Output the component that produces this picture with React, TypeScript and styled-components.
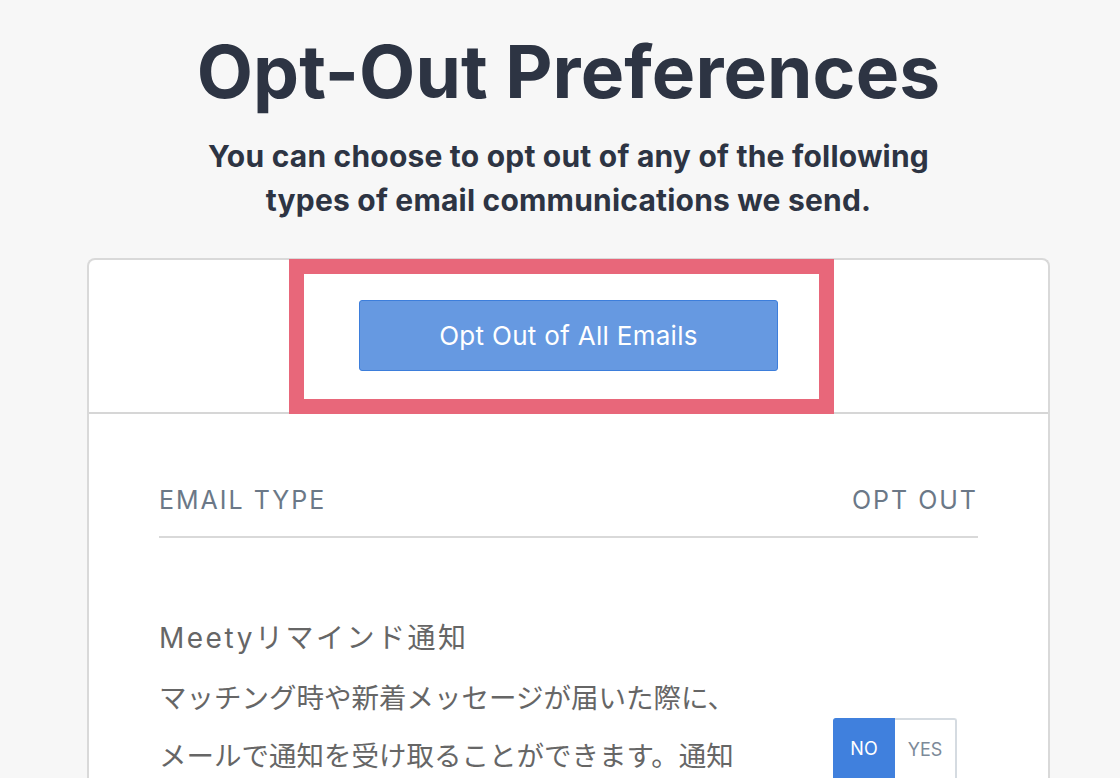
import React from "react";
import styled, { createGlobalStyle } from "styled-components";

const GlobalStyle = createGlobalStyle`
  html, body {
    margin: 0;
    padding: 0;
    background: #f7f7f7;
    font-family: Inter, "Noto Sans CJK JP", sans-serif;
    overflow: hidden;
  }
`;

const Page = styled.div`
  width: 963px;
  margin-left: 87px;
  display: flex;
  flex-direction: column;
  align-items: center;
`;

const Title = styled.h1`
  margin: 30px 0 0;
  font-size: 73px;
  line-height: 84px;
  font-weight: 700;
  color: #2d3443;
  letter-spacing: 0.1px;
  text-align: center;
`;

const Subtitle = styled.p`
  margin: 20px 0 0;
  width: 780px;
  font-size: 30px;
  line-height: 44px;
  font-weight: 700;
  color: #2d3443;
  letter-spacing: 0.2px;
  text-align: center;
`;

const Card = styled.div`
  position: relative;
  box-sizing: border-box;
  width: 963px;
  margin-top: 36px;
  background: #fff;
  border: 2px solid #d9d9d9;
  border-bottom: none;
  border-radius: 8px 8px 0 0;
`;

const TopSection = styled.div`
  box-sizing: border-box;
  height: 154px;
  padding-top: 40px;
  display: flex;
  justify-content: center;
  border-bottom: 2px solid #d6d6d6;
`;

const PrimaryButton = styled.button`
  box-sizing: border-box;
  width: 419px;
  height: 71px;
  background: #6699e1;
  border: 1px solid #3d7edb;
  border-radius: 3px;
  color: #fff;
  font-family: Inter, sans-serif;
  font-size: 26px;
  letter-spacing: 0.3px;
  font-weight: 400;
  cursor: pointer;
`;

const Highlight = styled.div`
  position: absolute;
  left: 200px;
  top: -1px;
  width: 545px;
  height: 155px;
  box-sizing: border-box;
  border: 15px solid #e8677a;
  pointer-events: none;
`;

const Body = styled.div`
  padding: 0 70px;
`;

const HeaderRow = styled.div`
  display: flex;
  justify-content: space-between;
  align-items: flex-end;
  height: 124px;
  box-sizing: border-box;
  padding-bottom: 21px;
  border-bottom: 2px solid #d9d9d9;
`;

const HeaderLabel = styled.span`
  font-size: 25px;
  line-height: 30px;
  letter-spacing: 2px;
  color: #6b7887;
  font-weight: 400;
`;

const TypeRow = styled.div`
  display: flex;
  justify-content: space-between;
  align-items: flex-start;
  padding-top: 80px;
`;

const TypeText = styled.div`
  display: flex;
  flex-direction: column;
`;

const TypeTitle = styled.div`
  font-family: Inter, "Noto Sans CJK JP", sans-serif;
  font-size: 28px;
  line-height: 40px;
  letter-spacing: 2.5px;
  color: #666;
`;

const TypeDesc = styled.div`
  margin-top: 9px;
  font-family: "Noto Sans CJK JP", sans-serif;
  font-size: 27.5px;
  line-height: 58px;
  color: #666;
  width: 620px;
`;

const Toggle = styled.div`
  display: flex;
  margin-top: 100px;
  margin-right: 21px;
`;

const ToggleOption = styled.button<{ $active?: boolean }>`
  box-sizing: border-box;
  width: 62px;
  height: 80px;
  padding: 0 0 20px;
  font-family: Inter, sans-serif;
  font-size: 18px;
  border-radius: ${(p) => (p.$active ? "3px 0 0 0" : "0 3px 0 0")};
  background: ${(p) => (p.$active ? "#4080dd" : "#fff")};
  color: ${(p) => (p.$active ? "#fff" : "#7d8a99")};
  border: ${(p) => (p.$active ? "1px solid #4080dd" : "2px solid #d5dbe1")};
  border-left: ${(p) => (p.$active ? "1px solid #4080dd" : "none")};
  border-bottom: none;
`;

export default function App() {
  return (
    <>
      <GlobalStyle />
      <Page>
        <Title>Opt-Out Preferences</Title>
        <Subtitle>
          You can choose to opt out of any of the following types of email communications we send.
        </Subtitle>
        <Card>
          <TopSection>
            <PrimaryButton>Opt Out of All Emails</PrimaryButton>
          </TopSection>
          <Highlight />
          <Body>
            <HeaderRow>
              <HeaderLabel>EMAIL TYPE</HeaderLabel>
              <HeaderLabel>OPT OUT</HeaderLabel>
            </HeaderRow>
            <TypeRow>
              <TypeText>
                <TypeTitle>Meetyリマインド通知</TypeTitle>
                <TypeDesc>
                  マッチング時や新着メッセージが届いた際に、
                  <br />
                  メールで通知を受け取ることができます。通知
                </TypeDesc>
              </TypeText>
              <Toggle>
                <ToggleOption $active>NO</ToggleOption>
                <ToggleOption>YES</ToggleOption>
              </Toggle>
            </TypeRow>
          </Body>
        </Card>
      </Page>
    </>
  );
}
